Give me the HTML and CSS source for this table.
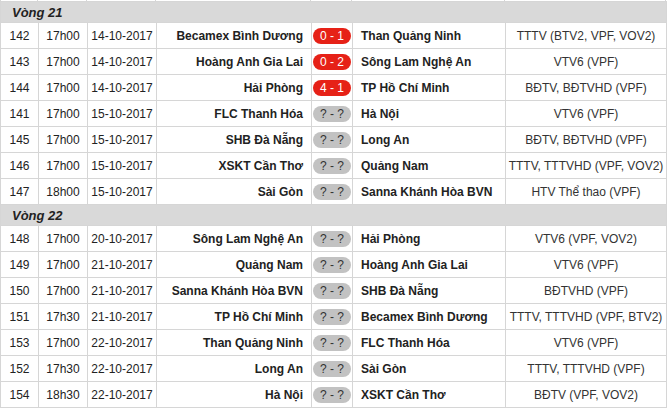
FILE: index.html
```html
<!DOCTYPE html>
<html>
<head>
<meta charset="utf-8">
<link rel="stylesheet" href="styles.css">
</head>
<body>
<div class="top-edge"><span class="c1"></span><span class="c2"></span><span class="c3"></span><span class="c4"></span><span class="c5"></span><span class="c6"></span><span class="c7"></span></div>
<table class="schedule">
<colgroup>
<col class="w-no"><col class="w-time"><col class="w-date"><col class="w-home"><col class="w-score"><col class="w-away"><col class="w-tv">
</colgroup>
<tbody>
<tr class="round"><td colspan="7">Vòng 21</td></tr>
<tr><td>142</td><td>17h00</td><td>14-10-2017</td><td class="home">Becamex Bình Dương</td><td class="score"><span class="badge red">0 - 1</span></td><td class="away">Than Quảng Ninh</td><td class="tv">TTTV (BTV2, VPF, VOV2)</td></tr>
<tr><td>143</td><td>17h00</td><td>14-10-2017</td><td class="home">Hoàng Anh Gia Lai</td><td class="score"><span class="badge red">0 - 2</span></td><td class="away">Sông Lam Nghệ An</td><td class="tv">VTV6 (VPF)</td></tr>
<tr><td>144</td><td>17h00</td><td>14-10-2017</td><td class="home">Hải Phòng</td><td class="score"><span class="badge red">4 - 1</span></td><td class="away">TP Hồ Chí Minh</td><td class="tv">BĐTV, BĐTVHD (VPF)</td></tr>
<tr><td>141</td><td>17h00</td><td>15-10-2017</td><td class="home">FLC Thanh Hóa</td><td class="score"><span class="badge grey">? - ?</span></td><td class="away">Hà Nội</td><td class="tv">VTV6 (VPF)</td></tr>
<tr><td>145</td><td>17h00</td><td>15-10-2017</td><td class="home">SHB Đà Nẵng</td><td class="score"><span class="badge grey">? - ?</span></td><td class="away">Long An</td><td class="tv">BĐTV, BĐTVHD (VPF)</td></tr>
<tr><td>146</td><td>17h00</td><td>15-10-2017</td><td class="home">XSKT Cần Thơ</td><td class="score"><span class="badge grey">? - ?</span></td><td class="away">Quảng Nam</td><td class="tv">TTTV, TTTVHD (VPF, VOV2)</td></tr>
<tr><td>147</td><td>18h00</td><td>15-10-2017</td><td class="home">Sài Gòn</td><td class="score"><span class="badge grey">? - ?</span></td><td class="away">Sanna Khánh Hòa BVN</td><td class="tv">HTV Thể thao (VPF)</td></tr>
<tr class="round"><td colspan="7">Vòng 22</td></tr>
<tr><td>148</td><td>17h00</td><td>20-10-2017</td><td class="home">Sông Lam Nghệ An</td><td class="score"><span class="badge grey">? - ?</span></td><td class="away">Hải Phòng</td><td class="tv">VTV6 (VPF, VOV2)</td></tr>
<tr><td>149</td><td>17h00</td><td>21-10-2017</td><td class="home">Quảng Nam</td><td class="score"><span class="badge grey">? - ?</span></td><td class="away">Hoàng Anh Gia Lai</td><td class="tv">VTV6 (VPF)</td></tr>
<tr><td>150</td><td>17h00</td><td>21-10-2017</td><td class="home">Sanna Khánh Hòa BVN</td><td class="score"><span class="badge grey">? - ?</span></td><td class="away">SHB Đà Nẵng</td><td class="tv">BĐTVHD (VPF)</td></tr>
<tr><td>151</td><td>17h30</td><td>21-10-2017</td><td class="home">TP Hồ Chí Minh</td><td class="score"><span class="badge grey">? - ?</span></td><td class="away">Becamex Bình Dương</td><td class="tv">TTTV, TTTVHD (VPF, BTV2)</td></tr>
<tr><td>153</td><td>17h00</td><td>22-10-2017</td><td class="home">Than Quảng Ninh</td><td class="score"><span class="badge grey">? - ?</span></td><td class="away">FLC Thanh Hóa</td><td class="tv">VTV6 (VPF)</td></tr>
<tr><td>152</td><td>17h30</td><td>22-10-2017</td><td class="home">Long An</td><td class="score"><span class="badge grey">? - ?</span></td><td class="away">Sài Gòn</td><td class="tv">TTTV, TTTVHD (VPF)</td></tr>
<tr><td>154</td><td>18h30</td><td>22-10-2017</td><td class="home">Hà Nội</td><td class="score"><span class="badge grey">? - ?</span></td><td class="away">XSKT Cần Thơ</td><td class="tv">BĐTV (VPF, VOV2)</td></tr>
</tbody>
</table>
</body>
</html>
```
FILE: styles.css
```css
html, body {
  margin: 0;
  padding: 0;
  background: #fff;
}
body {
  font-family: "Liberation Sans", Arial, sans-serif;
  font-size: 12px;
  color: #222;
  width: 667px;
  overflow: hidden;
}
.top-edge {
  display: flex;
  height: 1px;
  width: 667px;
}
.top-edge span {
  border-right: 1px solid #d6d6d6;
  box-sizing: border-box;
}
.top-edge .c1 { width: 38px; border-left: 1px solid #d6d6d6; }
.top-edge .c2 { width: 49px; }
.top-edge .c3 { width: 69px; }
.top-edge .c4 { width: 155px; }
.top-edge .c5 { width: 41px; }
.top-edge .c6 { width: 153px; }
.top-edge .c7 { width: 161px; }

.schedule {
  border-collapse: collapse;
  table-layout: fixed;
  width: 666px;
}
.w-no { width: 38px; }
.w-time { width: 49px; }
.w-date { width: 69px; }
.w-home { width: 155px; }
.w-score { width: 41px; }
.w-away { width: 153px; }
.w-tv { width: 161px; }

.schedule td {
  border: 1px solid #d6d6d6;
  height: 26px;
  padding: 0;
  text-align: center;
  vertical-align: middle;
  white-space: nowrap;
  box-sizing: border-box;
}
.schedule tr.round td {
  background: #d9d9d9;
  height: 21px;
  text-align: left;
  padding-left: 11px;
  font-weight: bold;
  font-style: italic;
  font-size: 13px;
  color: #222;
}
.schedule td.home {
  text-align: right;
  padding-right: 8px;
  font-weight: bold;
}
.schedule td.away {
  text-align: left;
  padding-left: 8px;
  font-weight: bold;
}
.schedule td.tv {
  color: #333;
}
.badge {
  display: inline-block;
  width: 38px;
  height: 16px;
  line-height: 16px;
  border-radius: 8px;
  font-size: 12px;
  text-align: center;
  vertical-align: middle;
}
.badge.red {
  background: #e62117;
  color: #fff;
}
.badge.grey {
  background: #c2c2c2;
  color: #333;
}
```
